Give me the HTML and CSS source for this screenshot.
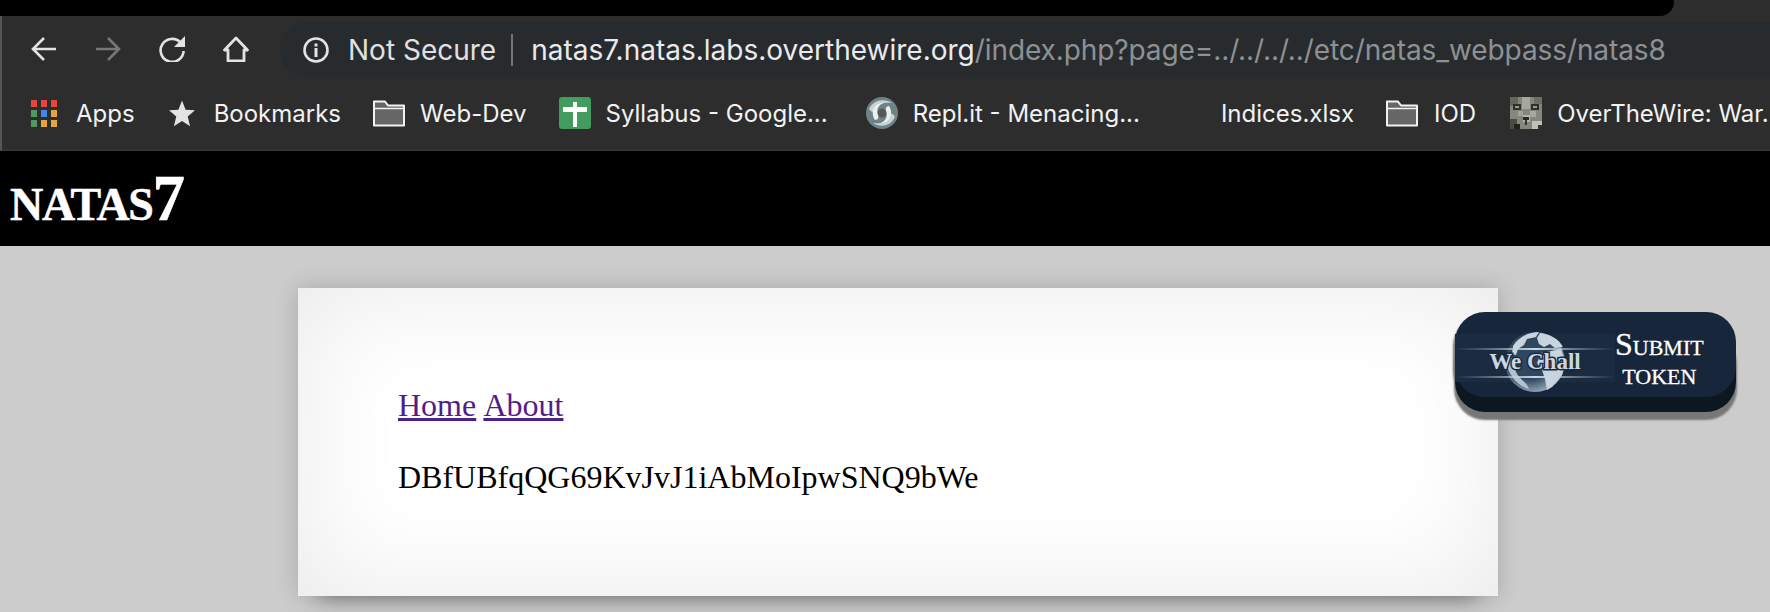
FILE: index.html
```html
<!DOCTYPE html>
<html lang="en">
<head>
    <meta charset="UTF-8">
    <meta name="viewport" content="width=device-width, initial-scale=1.0">
    <title>natas7</title>
    <link rel="stylesheet" href="styles.css">
</head>
<body>

    <div class="topbar"><div class="topbar-black"></div></div>

    <div class="toolbar">
        <div class="nav-row">
            <svg class="nav-icon" viewBox="0 0 26 26"><path d="M25 13H2M13 2 2 13l11 11" fill="none" stroke="#e3e3e3" stroke-width="2.600"/></svg>
            <svg class="nav-icon" viewBox="0 0 26 26"><path d="M1 13h23M13 2l11 11-11 11" fill="none" stroke="#777" stroke-width="2.600"/></svg>
            <svg class="nav-icon" viewBox="0 0 26 26"><path d="M21.5 6.500A11.500 11.500 0 1 0 24.600 15" fill="none" stroke="#e3e3e3" stroke-width="2.600"/><path d="M26 0v11H15z" fill="#e3e3e3"/></svg>
            <svg class="nav-icon" viewBox="0 0 26 26"><path d="M13 2 1.500 14H5v11h16V14h3.500z" fill="none" stroke="#e3e3e3" stroke-width="2.800" stroke-linejoin="round"/></svg>
            <div class="url-pill">
                <svg class="info-icon" viewBox="0 0 26 26"><circle cx="13" cy="13" r="11.500" fill="none" stroke="#e3e3e3" stroke-width="2.600"/><rect x="11.500" y="11" width="3" height="9" fill="#e3e3e3"/><rect x="11.500" y="6.500" width="3" height="3" fill="#e3e3e3"/></svg>
                <span class="not-secure">Not Secure</span>
                <span class="url-divider"></span>
                <span class="url"><span class="url-host">natas7.natas.labs.overthewire.org</span>/index.php?page=../../../../etc/natas_webpass/natas8</span>
            </div>
        </div>

        <div class="bookmarks">
            <div class="bookmark">
                <svg class="bm-icon" viewBox="0 0 26 27">
                    <rect x="0" y="0" width="6" height="7" fill="#e5463d"/><rect x="10" y="0" width="6" height="7" fill="#e5463d"/><rect x="20" y="0" width="6" height="7" fill="#e5463d"/>
                    <rect x="0" y="10" width="6" height="7" fill="#4f9a5c"/><rect x="10" y="10" width="6" height="7" fill="#4088e8"/><rect x="20" y="10" width="6" height="7" fill="#e5a33b"/>
                    <rect x="0" y="20" width="6" height="7" fill="#4f9a5c"/><rect x="10" y="20" width="6" height="7" fill="#e5a33b"/><rect x="20" y="20" width="6" height="7" fill="#e5a33b"/>
                </svg>
                <span>Apps</span>
            </div>
            <div class="bookmark">
                <svg class="bm-icon" viewBox="0 0 26 26"><path d="M13 0l3.600 9.200 9.400.6-7.300 6.200 2.400 9.700L13 20.400l-8.100 5.300 2.400-9.700L0 9.800l9.400-.6z" fill="#e3e3e3"/></svg>
                <span>Bookmarks</span>
            </div>
            <div class="bookmark">
                <svg class="bm-icon folder" viewBox="0 0 32 28"><path d="M1 26V2.500h11l3 4h16V26.500H1z" fill="#666" stroke="#f2f2f2" stroke-width="2" stroke-linejoin="round"/><path d="M1 9.500h30" stroke="#f2f2f2" stroke-width="1.500"/></svg>
                <span>Web-Dev</span>
            </div>
            <div class="bookmark">
                <svg class="bm-icon sheets" viewBox="0 0 32 32"><rect width="32" height="32" rx="3" fill="#439b5e"/><rect x="4" y="10" width="24" height="5" fill="#fff"/><rect x="14" y="5" width="4" height="25" fill="#fff"/></svg>
                <span>Syllabus - Google...</span>
            </div>
            <div class="bookmark bookmark-repl">
                <svg class="bm-icon sheets" viewBox="0 0 32 32">
                    <circle cx="16" cy="16" r="16" fill="#6f8288"/>
                    <path d="M3 12C7 3 18 1 26 6c-6-1-13 0-16 7-1 3-4 3-7-1zM29 20c-4 9-14 11-22 6 6 1 13 0 16-7 1-3 4-3 6 1z" fill="#c9d2d4"/>
                    <path d="M9 23C4 15 8 6 17 6c-4 2-7 6-5 11 1 3 0 6-3 6zM23 9c5 8 1 17-8 17 4-2 7-6 5-11-1-3 0-6 3-6z" fill="#eceeee"/>
                    <circle cx="16" cy="16" r="4.500" fill="#55595a"/>
                </svg>
                <span>Repl.it - Menacing...</span>
            </div>
            <div class="bookmark bookmark-plain">
                <span>Indices.xlsx</span>
            </div>
            <div class="bookmark bookmark-iod">
                <svg class="bm-icon folder" viewBox="0 0 32 28"><path d="M1 26V2.500h11l3 4h16V26.500H1z" fill="#666" stroke="#f2f2f2" stroke-width="2" stroke-linejoin="round"/><path d="M1 9.500h30" stroke="#f2f2f2" stroke-width="1.500"/></svg>
                <span>IOD</span>
            </div>
            <div class="bookmark">
                <svg class="bm-icon sheets cat" viewBox="0 0 32 32">
                    <rect width="32" height="32" fill="#85877c"/>
                    <rect x="0" y="0" width="8" height="9" fill="#65675d"/><rect x="24" y="0" width="8" height="7" fill="#6d6f65"/>
                    <rect x="12" y="0" width="8" height="12" fill="#a6a79d"/><rect x="13" y="18" width="7" height="7" fill="#b5b6aa"/>
                    <rect x="3" y="7" width="8" height="6" fill="#2f302b"/><rect x="21" y="7" width="8" height="6" fill="#2f302b"/>
                    <rect x="5" y="9" width="4" height="2" fill="#9a9b90"/><rect x="23" y="9" width="4" height="2" fill="#9a9b90"/>
                    <rect x="13" y="20" width="6" height="3" fill="#2a2b26"/><rect x="15" y="23" width="2" height="5" fill="#35362f"/>
                    <rect x="0" y="22" width="7" height="10" fill="#4a4b42"/><rect x="4" y="27" width="6" height="5" fill="#22231e"/>
                    <rect x="22" y="24" width="10" height="8" fill="#bfc0b4"/><rect x="28" y="28" width="4" height="4" fill="#33342e"/>
                    <rect x="8" y="14" width="5" height="5" fill="#a2a398"/><rect x="20" y="14" width="6" height="6" fill="#a7a89c"/>
                </svg>
                <span>OverTheWire: War...</span>
            </div>
        </div>
    </div>

    <div class="header">
        <h1>natas7</h1>
    </div>

    <div class="content">
        <div class="panel">
            <p><a href="#">Home</a> <a href="#">About</a></p>
            <p>DBfUBfqQG69KvJvJ1iAbMoIpwSNQ9bWe</p>
        </div>
    </div>

    <div class="wechall">
        <svg class="wechall-logo" viewBox="0 0 160 85">
            <defs>
                <linearGradient id="streak" x1="0" x2="1" y1="0" y2="0">
                    <stop offset="0" stop-color="#9fb2c6" stop-opacity="0"/>
                    <stop offset="0.5" stop-color="#d3dee8" stop-opacity="0.95"/>
                    <stop offset="1" stop-color="#9fb2c6" stop-opacity="0"/>
                </linearGradient>
                <radialGradient id="sphere" cx="0.4" cy="0.4" r="0.65">
                    <stop offset="0.6" stop-color="#2f4860"/>
                    <stop offset="1" stop-color="#9fb1c2"/>
                </radialGradient>
            </defs>
            <rect x="0" y="22" width="160" height="48" fill="#1b2c40"/>
            <circle cx="80" cy="50" r="30" fill="url(#sphere)"/>
            <path d="M58 34c6-10 17-14 26-14l-3 5-9 2-3 6-6 4-2 6-4-1zM85 21c10 1 19 6 23 14l-8 1-5-4-6 3-5-3-2-6zM86 41l20-4 4 13-3 13-10 12-5 3-2-11-3-9-5-7 3-7z" fill="#c8d4df"/>
            <path d="M51 50c2 12 11 24 23 27-3-8-9-9-13-17l-2-10-4-6z" fill="#b3c2d0"/>
            <rect x="0" y="36" width="160" height="2" fill="url(#streak)"/>
            <rect x="0" y="64" width="160" height="2" fill="url(#streak)"/>
            <text class="wechall-name" x="80" y="57" text-anchor="middle">We Chall</text>
        </svg>
        <div class="wechall-label">Submit<br>token</div>
    </div>

</body>
</html>
```

FILE: styles.css
```css
html, body {
    margin: 0;
    height: 612px;
    overflow: hidden;
}
body {
    background-color: #ccc;
    font-family: "Liberation Serif", serif;
}
.topbar {
    height: 16px;
    background: #2d2d2e;
}
.topbar-black {
    width: 1674px;
    height: 16px;
    background: #000;
    border-bottom-right-radius: 14px;
}
.toolbar {
    height: 128px;
    padding-top: 6px;
    background: #2d2d2e;
    border-left: 2px solid #555;
    border-bottom: 1px solid #3b3b3c;
    font-family: Inter, "Noto Sans", sans-serif;
}
.nav-row {
    display: flex;
    align-items: center;
    height: 55px;
    padding-left: 29px;
}
.nav-icon {
    width: 26px;
    height: 26px;
    margin-right: 38px;
    margin-top: -2px;
}
.url-pill {
    display: flex;
    align-items: center;
    flex: 1;
    height: 55px;
    margin-left: -7px;
    padding-left: 23px;
    background: #282b2e;
    border-radius: 28px 0 0 28px;
    font-size: 28px;
    white-space: nowrap;
}
.info-icon {
    width: 26px;
    height: 26px;
    margin-right: 19px;
}
.not-secure {
    color: #e0e0e0;
}
.url-divider {
    width: 2px;
    height: 32px;
    margin: 0 18px 0 15px;
    background: #70757a;
}
.url {
    color: #8e9194;
    letter-spacing: -0.09px;
}
.url-host {
    color: #e8eaed;
    letter-spacing: 0;
}
.bookmarks {
    display: flex;
    align-items: center;
    height: 72px;
    padding-left: 29px;
    font-size: 24px;
    color: #f2f2f2;
    white-space: nowrap;
}
.bookmark {
    display: flex;
    align-items: center;
    flex-shrink: 0;
    margin-right: 32px;
}
.bookmark:first-child {
    margin-right: 34px;
}
.bookmark-repl {
    margin-left: 6px;
}
.bookmark-plain {
    margin-left: 49px;
}
.bookmark-iod {
    margin-right: 34px;
}
.bookmark-iod .folder {
    margin-right: 16px;
}
.bm-icon {
    width: 26px;
    height: 27px;
    margin-right: 19px;
}
.folder {
    width: 32px;
    height: 28px;
    margin-right: 15px;
}
.sheets {
    width: 32px;
    height: 32px;
    margin-right: 15px;
}
.cat {
    filter: blur(0.5px);
}
.header {
    height: 95px;
    background: #000;
}
.header h1 {
    margin: 0;
    padding-left: 10px;
    font-size: 65px;
    line-height: 94px;
    letter-spacing: -1.3px;
    font-variant: small-caps;
    font-weight: bold;
    color: #fff;
    -webkit-text-stroke: 0.5px #fff;
}
.content {
    padding: 42px 0 0 298px;
}
.panel {
    width: 1100px;
    height: 209px;
    padding: 99px 0 0 100px;
    background: #fff;
    box-shadow: inset 0 0 110px rgba(0, 0, 0, 0.09), 0 0 22px rgba(0, 0, 0, 0.18), 0 24px 20px -22px rgba(0, 0, 0, 0.38);
    font-size: 32px;
    line-height: 37px;
    color: #000;
}
.panel p {
    width: fit-content;
    margin: 0 0 35px;
    word-spacing: 1px;
}
.panel a {
    color: #4f2089;
}
/* fixed button on the right of the page */
.wechall {
    position: absolute;
    left: 1455px;
    top: 312px;
    display: flex;
    align-items: center;
    width: 281px;
    height: 85px;
    background: #17263a;
    border-radius: 30px;
    box-shadow: 0 15px 0 #0d1720, 0 22px 2px 1px #777, -2px 4px 2px #777;
}
.wechall-logo {
    width: 160px;
    height: 85px;
    flex-shrink: 0;
}
.wechall-name {
    font-family: "Liberation Serif", serif;
    font-size: 23px;
    font-weight: bold;
    fill: #ccd6e0;
    stroke: #1a2a3d;
    stroke-width: 3px;
    paint-order: stroke;
}
.wechall-label {
    flex: 1;
    margin: 8px 40px 0 0;
    text-align: center;
    font-size: 32px;
    line-height: 29px;
    font-variant: small-caps;
    color: #fff;
    -webkit-text-stroke: 0.3px #fff;
}
```
